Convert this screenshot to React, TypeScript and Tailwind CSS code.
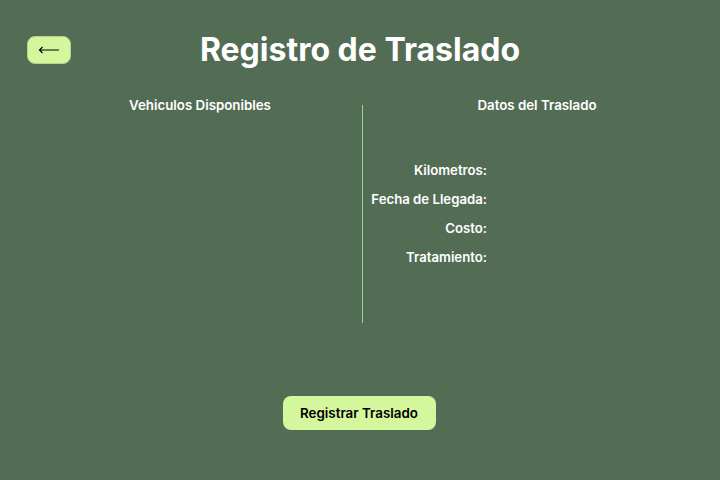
const campos = ["Kilometros:", "Fecha de Llegada:", "Costo:", "Tratamiento:"];

export default function App() {
  return (
    <div
      className="flex h-[480px] w-[720px] flex-col bg-[#536d55] text-white"
      style={{ fontFamily: "Inter, 'Liberation Sans', sans-serif" }}
    >
      {/* Encabezado */}
      <div className="grid grid-cols-[1fr_auto_1fr] items-center px-[27px] pt-[31px]">
        <button className="flex h-[28px] w-[44px] items-center justify-center rounded-lg border border-[#b3d48a] bg-[#d4f79d] text-black">
          <svg width="22" height="8" viewBox="0 0 22 8" fill="none" stroke="currentColor" strokeWidth="1.2">
            <path d="M21 4H1.5M4.5 1L1.5 4l3 3" />
          </svg>
        </button>
        <h1 className="text-[32px] font-bold leading-[38px]">Registro de Traslado</h1>
        <div />
      </div>

      {/* Columnas */}
      <div className="mt-[26px] flex h-[228px]">
        <div className="ml-[40px] w-[320px] text-center">
          <h2 className="text-[13.3px] font-semibold leading-[20px]">Vehiculos Disponibles</h2>
        </div>

        <div className="ml-[2px] mt-[10px] h-[218px] w-px bg-[#8fdd8a]" />

        <div className="w-[348px]">
          <h2 className="text-center text-[13.3px] font-semibold leading-[20px]">Datos del Traslado</h2>
          <div className="mt-[41px] flex flex-col">
            {campos.map((campo) => (
              <div key={campo} className="flex h-[29px] items-center">
                <label className="w-[124px] text-right text-[13.2px] font-semibold">{campo}</label>
                <input className="ml-2 w-[180px] bg-transparent text-[13px] outline-none" />
              </div>
            ))}
          </div>
        </div>
      </div>

      <div className="mt-[73px] flex justify-center">
        <button className="ml-[-2px] h-[34px] w-[153px] rounded-lg bg-[#d4f79d] text-[13.4px] font-semibold text-black">
          Registrar Traslado
        </button>
      </div>
    </div>
  );
}
